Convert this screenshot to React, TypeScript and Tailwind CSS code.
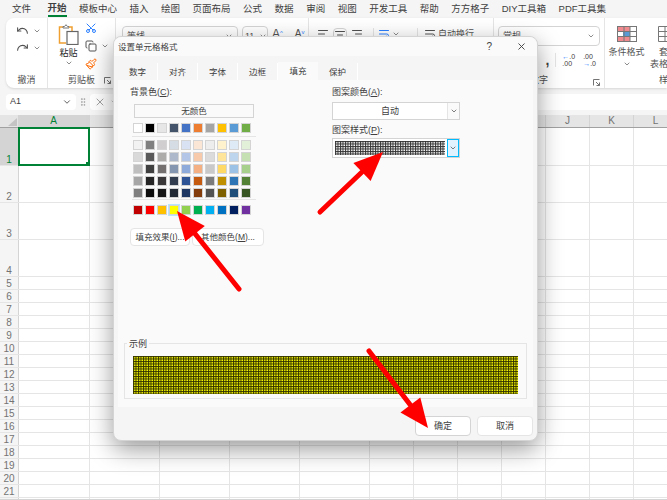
import { X, ChevronDown, Undo, Redo, Scissors, Copy, Paintbrush, GripVertical, AlignLeft, AlignCenter, AlignRight, WrapText } from 'lucide-react';

const font = { fontFamily: '"Liberation Sans", "Noto Sans CJK SC", sans-serif' };

const menus = ['文件', '开始', '模板中心', '插入', '绘图', '页面布局', '公式', '数据', '审阅', '视图', '开发工具', '帮助', '方方格子', 'DIY工具箱', 'PDF工具集'];
const tabs = ['数字', '对齐', '字体', '边框', '填充', '保护'];
const cols = ['A', 'B', 'C', 'D', 'E', 'F', 'G', 'H', 'I', 'J', 'K', 'L'];
const tallRows = [1, 2, 3, 4];
const shortRows = Array.from({ length: 18 }, (_, i) => i + 5);

const topColors = ['#ffffff', '#000000', '#e7e6e6', '#44546a', '#4472c4', '#ed7d31', '#a5a5a5', '#ffc000', '#5b9bd5', '#70ad47'];
const shades = [
  ['#f2f2f2', '#808080', '#d0cece', '#d6dce4', '#d9e2f3', '#fbe5d5', '#ededed', '#fff2cc', '#deeaf6', '#e2efd9'],
  ['#d9d9d9', '#595959', '#aeabab', '#adb9ca', '#b4c6e7', '#f7caac', '#dbdbdb', '#fee599', '#bdd6ee', '#c5e0b3'],
  ['#bfbfbf', '#404040', '#757070', '#8496b0', '#8eaadb', '#f4b083', '#c9c9c9', '#ffd965', '#9cc2e5', '#a8d08d'],
  ['#a6a6a6', '#262626', '#3a3838', '#323e4f', '#2f5496', '#c55a11', '#7b7b7b', '#bf8f00', '#2e75b5', '#538135'],
  ['#7f7f7f', '#0d0d0d', '#171616', '#222a35', '#1f3763', '#833c0b', '#525252', '#7f6000', '#1e4e79', '#375623'],
];
const standard = ['#c00000', '#ff0000', '#ffc000', '#ffff00', '#92d050', '#00b050', '#00b0f0', '#0070c0', '#002060', '#7030a0'];

function Swatch({ color, active }: { color: string; active?: boolean }) {
  return (
    <div className={active ? 'flex h-3 w-3 items-center justify-center bg-sky-200' : 'flex h-3 w-3 items-center justify-center'}>
      <div className="h-2.5 w-2.5 border border-neutral-300" style={{ backgroundColor: color }} />
    </div>
  );
}

function Pattern({ id, bg, line }: { id: string; bg: string; line: string }) {
  return (
    <svg className="block h-full w-full" aria-hidden="true">
      <defs>
        <pattern id={id} width="2.5" height="2.5" patternUnits="userSpaceOnUse">
          <rect width="2.5" height="2.5" fill={bg} />
          <rect width="1" height="2.5" fill={line} />
          <rect width="2.5" height="1" fill={line} />
        </pattern>
      </defs>
      <rect width="100%" height="100%" fill={`url(#${id})`} />
    </svg>
  );
}

function Launcher() {
  return (
    <svg width="7" height="7" viewBox="0 0 7 7" className="text-neutral-500" aria-hidden="true">
      <path d="M.5 6.5v-6h6M3 3l3.5 3.5M6.5 3.5v3h-3" stroke="currentColor" fill="none" />
    </svg>
  );
}

function PasteIcon() {
  return (
    <svg width="21" height="21" viewBox="0 0 21 21" aria-hidden="true">
      <path d="M5 3H1.5v16H8" stroke="#f0a030" strokeWidth="1.5" fill="none" />
      <path d="M5 4V2.5h1.5L8 .7l1.5 1.8H11V4z" stroke="#777" fill="#fff" />
      <path d="M11 3h3v4" stroke="#f0a030" strokeWidth="1.5" fill="none" />
      <rect x="9" y="7.5" width="11" height="13" fill="#fff" stroke="#666" strokeWidth="1.2" />
    </svg>
  );
}

function Ribbon() {
  return (
    <div className="ml-1.5 flex h-[70px] overflow-hidden rounded-l-lg bg-white text-[9px] leading-3 text-neutral-600 shadow-sm">
      <div className="flex w-[41px] shrink-0 flex-col items-center pt-1 pb-0.5">
        <div className="flex flex-1 flex-col gap-1 pt-0.5 pl-1">
          <div className="flex items-center gap-1"><Undo size={13} /><ChevronDown size={8} /></div>
          <div className="flex items-center gap-1"><Redo size={13} /><ChevronDown size={8} /></div>
        </div>
        <span>撤消</span>
      </div>
      <div className="flex w-[68px] shrink-0 flex-col border-l border-neutral-200 pt-1 pb-0.5 pl-2.5">
        <div className="flex flex-1 gap-1.5">
          <div className="flex flex-col items-center pt-0.5">
            <PasteIcon />
            <span className="mt-0.5 text-neutral-800">粘贴</span>
            <ChevronDown size={8} />
          </div>
          <div className="flex flex-col gap-1.5">
            <Scissors size={12} className="-rotate-90 text-blue-500" />
            <div className="flex items-center gap-1"><Copy size={12} /><ChevronDown size={8} /></div>
            <Paintbrush size={12} className="text-orange-500" />
          </div>
        </div>
        <div className="flex items-center justify-between pr-1"><span className="pl-2.5">剪贴板</span><Launcher /></div>
      </div>
      <div className="flex w-[193px] shrink-0 gap-1 border-l border-neutral-200 pt-2 pl-1.5">
        <div className="flex h-5 w-29 items-center justify-between rounded border border-neutral-300 px-1">等线<ChevronDown size={8} /></div>
        <div className="flex h-5 w-6.5 items-center justify-between rounded border border-neutral-300 pl-0.5">11<ChevronDown size={8} /></div>
        <span className="text-xs leading-4">A<sup className="text-[6px] text-blue-500">^</sup></span>
        <span className="ml-2 text-[10px] leading-4">A<sup className="text-[6px] text-blue-500">v</sup></span>
      </div>
      <div className="flex w-[185px] shrink-0 items-start gap-1 border-l border-neutral-200 pt-2.5 pl-2">
        <AlignLeft size={12} />
        <div className="rounded-sm border border-neutral-300"><AlignCenter size={12} /></div>
        <AlignRight size={12} className="mr-1.5" />
        <div className="flex w-10 items-center gap-0.5 border-l border-neutral-200 pl-1"><WrapText size={12} className="text-blue-500" /><ChevronDown size={8} /></div>
        <div className="flex items-center gap-0.5 border-l border-neutral-200 pl-1.5"><WrapText size={12} /><span className="whitespace-nowrap">自动换行</span></div>
      </div>
      <div className="flex w-[111px] shrink-0 flex-col border-l border-neutral-200 px-1 pt-2">
        <div className="flex h-5 items-center justify-between rounded border border-neutral-300 px-1">常规<ChevronDown size={8} /></div>
        <div className="mt-1.5 flex items-center justify-end gap-1.5 pr-1 font-bold text-neutral-700">
          <span className="text-sm leading-4">,</span>
          <div className="flex gap-2 border-l border-neutral-200 pl-1.5 text-[7px] leading-none font-normal">
            <span><span className="text-blue-500">←</span>.0<br />.00</span>
            <span>.00<br /><span className="text-blue-500">→</span>.0</span>
          </div>
        </div>
        <div className="flex flex-1 items-end justify-between pb-0.5 pl-8">
          <span>数字</span>
          <Launcher />
        </div>
      </div>
      <div className="flex w-11 shrink-0 flex-col items-center border-l border-neutral-200 pt-2">
        <svg width="20" height="16" viewBox="0 0 20 16" aria-hidden="true">
          <rect x="0.5" y="0.5" width="19" height="15" fill="#fff" stroke="#777" />
          <rect x="1" y="1" width="12" height="4" fill="#f08a8f" />
          <rect x="1" y="11" width="12" height="4" fill="#f08a8f" />
          <rect x="6" y="6" width="7" height="4" fill="#5b9bd5" />
          <path d="M7 0v16M13 0v16M0 5.5h20M0 10.5h20" stroke="#777" fill="none" />
        </svg>
        <span className="mt-1 whitespace-nowrap">条件格式</span>
        <ChevronDown size={8} className="mt-0.5" />
      </div>
      <div className="flex w-10 shrink-0 flex-col items-center pt-2 pb-0.5">
        <svg className="shrink-0" width="20" height="16" viewBox="0 0 20 16" aria-hidden="true">
          <path d="M.5.5h19v15H.5zM7 0v16M13 0v16M0 5.5h20M0 10.5h20" stroke="#777" fill="#fff" />
          <path d="M16 6v8" stroke="#2f7fd0" strokeWidth="2" />
        </svg>
        <span className="mt-1 whitespace-nowrap">套用</span>
        <span className="whitespace-nowrap">表格格式</span>
        <span className="mt-auto whitespace-nowrap">样式</span>
      </div>
    </div>
  );
}

function colClass(c: string) {
  if (c === 'A') return 'w-[71px]';
  if (c === 'B' || c === 'C' || c === 'D' || c === 'E') return 'w-17.5';
  return 'w-11';
}

function rowClass(r: number) {
  if (r === 1) return 'flex h-9.5 border-b border-neutral-200';
  if (r < 5) return 'flex h-[37px] border-b border-neutral-200';
  return 'flex h-[13px] border-b border-neutral-200';
}

function Sheet() {
  return (
    <div className="flex-1 overflow-hidden bg-white text-[10px] leading-none text-neutral-500">
      <div className="flex h-[13px] border-b border-neutral-400 bg-neutral-200">
        <div className="flex w-[18px] shrink-0 items-end justify-end pr-px pb-px">
          <svg width="9" height="8" viewBox="0 0 9 8" aria-hidden="true"><path d="M9 0v8H0z" fill="#c4c4c4" /></svg>
        </div>
        {cols.map((c) => (
          <div key={c} className={`flex shrink-0 items-center justify-center ${colClass(c)} ${c === 'A' ? 'bg-neutral-300 text-green-700' : 'border-l border-neutral-300'}`}>
            {c}
          </div>
        ))}
      </div>
      {[...tallRows, ...shortRows].map((r) => (
        <div key={r} className={rowClass(r)}>
          <div className={r === 1 ? 'flex w-[18px] shrink-0 items-end justify-center bg-neutral-300 text-green-700' : 'flex w-[18px] shrink-0 items-end justify-center bg-neutral-100'}>{r}</div>
          {cols.map((c) => (
            <div key={c} className={`shrink-0 border-l ${colClass(c)} ${c === 'A' ? 'relative border-neutral-300' : 'border-neutral-200'}`}>
              {c === 'A' && r === 1 && (
                <div className="absolute -inset-px border-2 border-green-700">
                  <div className="absolute -right-0.5 -bottom-0.5 h-1 w-1 bg-green-700" />
                </div>
              )}
            </div>
          ))}
        </div>
      ))}
    </div>
  );
}

function Dialog() {
  return (
    <div className="absolute left-[113px] top-9 flex h-[405px] w-[425px] flex-col rounded-lg border border-neutral-300 bg-neutral-100 text-[9px] leading-3 text-neutral-700 shadow-[0_8px_24px_rgba(0,0,0,0.4)]">
      <div className="flex h-[19px] items-center justify-between rounded-t-lg bg-neutral-50 pr-2 pl-1 text-[8.5px]">
        <span>设置单元格格式</span>
        <div className="flex items-center gap-6 pr-0.5">
          <span className="text-[10px]">?</span>
          <X size={11} />
        </div>
      </div>
      <div className="flex h-6 items-end pl-1 text-[8.5px]">
        {tabs.map((t) => (
          <div key={t} className={t === '填充' ? 'flex h-[18px] w-10 items-center justify-center bg-neutral-50' : 'flex h-[17px] w-10 items-center justify-center border-r border-white'}>{t}</div>
        ))}
      </div>
      <div className="mx-1 flex h-[327px] flex-col bg-neutral-50 px-1.5 pt-1.5 pb-2">
        <div className="flex flex-1 pl-1.5">
          <div className="w-[202px]">
            <div>背景色(<u>C</u>):</div>
            <div className="mt-1.5 ml-1 flex h-3.5 w-30 items-center justify-center border border-neutral-300 text-[8.5px]">无颜色</div>
            <div className="mt-1 ml-0.5 flex w-31 border-b border-neutral-200 pb-0.5">
              {topColors.map((c) => <Swatch key={c} color={c} />)}
            </div>
            <div className="ml-0.5 w-31 border-b border-neutral-200 pt-0.5">
              {shades.map((row, i) => (
                <div key={i} className="flex">
                  {row.map((c) => <Swatch key={c} color={c} />)}
                </div>
              ))}
            </div>
            <div className="mt-1 ml-0.5 flex w-31">
              {standard.map((c) => <Swatch key={c} color={c} active={c === '#ffff00'} />)}
            </div>
            <div className="mt-3 flex gap-0.5 text-[8.5px]">
              <div className="flex h-4.5 w-15 items-center justify-center rounded-sm border border-neutral-200 bg-white whitespace-nowrap">填充效果(<u>I</u>)...</div>
              <div className="flex h-4.5 w-18 items-center justify-center rounded-sm border border-neutral-200 bg-white whitespace-nowrap">其他颜色(<u>M</u>)...</div>
            </div>
          </div>
          <div className="w-32">
            <div>图案颜色(<u>A</u>):</div>
            <div className="mt-1 flex h-4.5 border border-neutral-300 bg-white">
              <div className="flex flex-1 items-center justify-center">自动</div>
              <div className="flex w-3 items-center justify-center border-l border-neutral-200 bg-neutral-50"><ChevronDown size={8} /></div>
            </div>
            <div className="mt-1">图案样式(<u>P</u>):</div>
            <div className="mt-0.5 flex h-5 border border-neutral-300 bg-white">
              <div className="flex-1 p-0.5"><Pattern id="style" bg="#ffffff" line="#333333" /></div>
              <div className="flex w-3 items-center justify-center border border-sky-400 bg-sky-100"><ChevronDown size={8} /></div>
            </div>
          </div>
        </div>
        <div className="relative h-14 border border-neutral-200 px-2 pt-3 pb-1">
          <span className="absolute -top-1.5 left-0.5 bg-neutral-50 px-0.5">示例</span>
          <Pattern id="sample" bg="#ffff00" line="#333300" />
        </div>
      </div>
      <div className="flex flex-1 items-center justify-end gap-1.5 pt-1 pr-1">
        <div className="flex h-5 w-14 items-center justify-center rounded-sm border border-neutral-300 bg-white">确定</div>
        <div className="flex h-5 w-14 items-center justify-center rounded-sm border border-neutral-200 bg-white">取消</div>
      </div>
    </div>
  );
}

function Arrow({ x1, y1, x2, y2 }: { x1: number; y1: number; x2: number; y2: number }) {
  const a = Math.atan2(y2 - y1, x2 - x1);
  const len = 29;
  const wide = 12.5;
  const bx = x2 - len * Math.cos(a);
  const by = y2 - len * Math.sin(a);
  const px = -Math.sin(a) * wide;
  const py = Math.cos(a) * wide;
  return (
    <>
      <line x1={x1} y1={y1} x2={bx} y2={by} stroke="#ff0000" strokeWidth="5" strokeLinecap="round" />
      <polygon points={`${x2},${y2} ${bx + px},${by + py} ${bx - px},${by - py}`} fill="#ff0000" />
    </>
  );
}

export default function App() {
  return (
    <div className="relative flex h-[500px] w-[667px] flex-col overflow-hidden bg-neutral-100" style={font}>
      <div className="flex h-[18px] items-center gap-[12.5px] pl-3 text-[9.5px] text-neutral-700">
        {menus.map((m) => (
          <span key={m} className={m === '开始' ? 'ml-1 border-b-2 border-green-700 font-bold whitespace-nowrap' : 'whitespace-nowrap'}>{m}</span>
        ))}
      </div>
      <Ribbon />
      <div className="flex h-[27px] items-center gap-0.5 pl-1.5 text-[9px] text-neutral-700">
        <div className="flex h-4 w-[70px] items-center justify-between rounded bg-white px-1">A1<ChevronDown size={10} /></div>
        <GripVertical size={10} className="text-neutral-400" />
        <div className="flex h-4 flex-1 items-center gap-1 rounded-l bg-white px-1"><X size={12} className="text-neutral-400" /><ChevronDown size={8} className="text-neutral-400" /></div>
      </div>
      <Sheet />
      <div className="h-px bg-neutral-300" />
      <Dialog />
      <svg className="absolute inset-0 h-full w-full" viewBox="0 0 667 500" aria-hidden="true">
        <Arrow x1={320} y1={212} x2={383} y2={152} />
        <Arrow x1={239} y1={289} x2={177} y2={211} />
        <Arrow x1={369} y1={351} x2={428} y2={428} />
      </svg>
    </div>
  );
}
